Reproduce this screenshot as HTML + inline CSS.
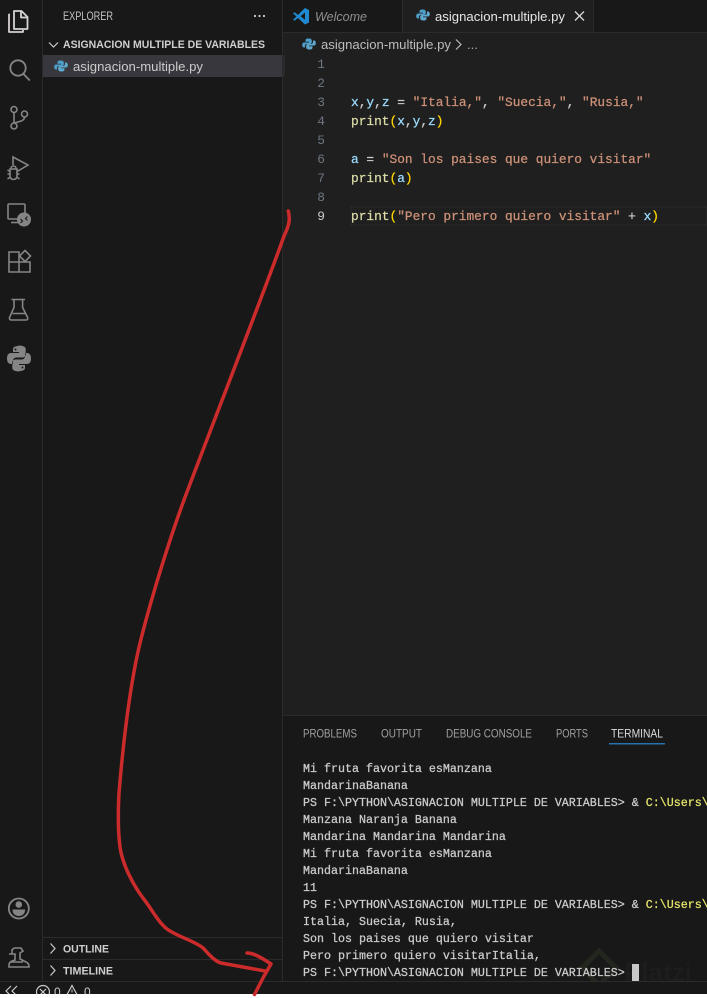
<!DOCTYPE html>
<html><head><meta charset="utf-8"><style>
html,body{margin:0;padding:0;background:#fff;width:707px;height:998px;overflow:hidden}
svg{display:block}
.s{font-family:"Liberation Sans",sans-serif}
.m{font-family:"Liberation Mono",monospace}
.c text{font-family:"Liberation Mono",monospace;font-size:12.83px;stroke:currentColor}
.c tspan{stroke-width:.25px}
.t text{font-family:"Liberation Mono",monospace;font-size:11.67px;fill:#cccccc;stroke-width:.25px}
.ln text{font-family:"Liberation Mono",monospace;font-size:12.83px;fill:#6e7681;text-anchor:end}
.i{fill:none;stroke:#858585;stroke-width:1.6}
</style></head><body>
<svg width="707" height="998" viewBox="0 0 707 998" xmlns="http://www.w3.org/2000/svg">
<defs>
<g id="py"><path d="M-.5-5.500c-2.500 0-3 1-3 2v1.300h3.500v.7h-5c-1.200 0-1.800 1-1.800 2.500s.6 2.500 1.800 2.500h1v-1.500c0-1.200.9-2 2-2h3c1 0 1.800-.8 1.800-1.800v-1.700c0-1-.9-2-3.300-2z" fill="#4d9fc9"/><path d="M.5 5.500c2.500 0 3-1 3-2v-1.300h-3.500v-.7h5c1.200 0 1.800-1 1.800-2.500s-.6-2.500-1.800-2.500h-1v1.500c0 1.200-.9 2-2 2h-3c-1 0-1.800.8-1.800 1.800v1.700c0 1 .9 2 3.300 2z" fill="#5fa9cf"/></g>
</defs>
<rect width="707" height="998" fill="#181818"/>
<!-- editor -->
<rect x="283" y="32" width="424" height="684" fill="#1f1f1f"/>
<rect x="282" y="0" width="1" height="981" fill="#2b2b2b"/>
<rect x="42" y="0" width="1" height="981" fill="#2b2b2b"/>
<rect x="283" y="32" width="424" height="1" fill="#2b2b2b"/>
<!-- sidebar -->
<text class="s" x="63" y="20" font-size="11.500" fill="#c4c4c4" textLength="50" lengthAdjust="spacingAndGlyphs">EXPLORER</text>
<circle cx="255" cy="16" r="1.100" fill="#ccc"/><circle cx="259.500" cy="16" r="1.100" fill="#ccc"/><circle cx="264" cy="16" r="1.100" fill="#ccc"/>
<path d="M49 42.500l4.500 4.500 4.500-4.500" fill="none" stroke="#ccc" stroke-width="1.200"/>
<text class="s" x="63" y="48" font-size="11" font-weight="700" fill="#cfcfcf" textLength="202" lengthAdjust="spacingAndGlyphs">ASIGNACION MULTIPLE DE VARIABLES</text>
<rect x="43" y="55" width="239" height="22" fill="#37373d"/>
<use href="#py" x="61" y="66"/>
<text class="s" x="73" y="71" font-size="13" fill="#cccccc" textLength="130" lengthAdjust="spacingAndGlyphs">asignacion-multiple.py</text>
<rect x="43" y="937" width="239" height="1" fill="#2b2b2b"/>
<rect x="43" y="959" width="239" height="1" fill="#2b2b2b"/>
<path d="M50.500 943.500l4.500 5-4.500 5" fill="none" stroke="#ccc" stroke-width="1.200"/>
<text class="s" x="63" y="952.500" font-size="11" font-weight="700" fill="#cfcfcf" textLength="46" lengthAdjust="spacingAndGlyphs">OUTLINE</text>
<path d="M50.500 965.500l4.500 5-4.500 5" fill="none" stroke="#ccc" stroke-width="1.200"/>
<text class="s" x="63" y="974.500" font-size="11" font-weight="700" fill="#cfcfcf" textLength="50" lengthAdjust="spacingAndGlyphs">TIMELINE</text>
<!-- activity icons -->
<g fill="none" stroke="#d4d4d4" stroke-width="1.800" stroke-linejoin="round">
<path d="M14 11h7.500l6 6v12h-13.500z"/><path d="M21 11v6.500h6.500"/><path d="M10 14.500h-1v17.500h14v-2" stroke="#d8d0d0"/>
</g>
<g class="i"><circle cx="18" cy="68" r="7.700" stroke-width="1.800"/><path d="M23.500 74l6.300 6.500" stroke-width="1.800"/></g>
<g class="i"><circle cx="14" cy="109.500" r="3"/><circle cx="14" cy="126" r="3"/><circle cx="24.500" cy="114" r="3"/><path d="M14 112.500v10.500M24.500 117c0 4-5 4.500-10.500 6"/></g>
<g class="i"><path d="M13 165v-8l15 8-10 6"/><path d="M10 169h7v7c0 2-1.500 3.500-3.500 3.500s-3.500-1.500-3.500-3.500zM11 168.500c0-1.500 1-2.500 2.500-2.500s2.500 1 2.500 2.500M7.500 170l2.500 1.500M19.500 170l-2.500 1.500M7.500 174h2.500M17 174h2.500M7.500 179l3-2M19.500 179l-3-2"/></g>
<g class="i"><rect x="8" y="204" width="17" height="15" rx="1"/><path d="M11 222.500h9"/></g>
<circle cx="24" cy="219.500" r="7" fill="#858585"/><path d="M20.500 219l2 2-2 2M27.500 216.500l-2 2 2 2" fill="none" stroke="#1f1f1f" stroke-width="1.200"/>
<g class="i"><path d="M9 252h10v20h-10zM9 262h21v10h-11"/><path d="M25 250.500l5.500 5.500-5.500 5.500-5.500-5.500z"/></g>
<g class="i"><path d="M11.500 299.500h13.500M14 299.500v8l-4.500 10c-.5 1.500.5 2.500 2 2.500h14.500c1.500 0 2.200-1 1.600-2.500l-5-10v-8M12.500 313.500h13"/></g>
<path d="M18.500 346c-5 0-5.500 2-5.500 3.500v2.500h6v1h-8c-2.500 0-4 2-4 5.500s1.500 5.500 4 5.500h2v-3c0-2 1.500-3.500 3.500-3.500h6c1.800 0 3.200-1.500 3.200-3.200v-5.300c0-1.800-1.700-3.500-7.700-3.500zM15.500 348.500a1 1 0 1 1 0 2 1 1 0 0 1 0-2zM19.500 371c5 0 5.500-2 5.500-3.500v-2.500h-6v-1h8c2.500 0 4-2 4-5.500s-1.500-5.500-4-5.500h-2v3c0 2-1.500 3.500-3.500 3.500h-6c-1.800 0-3.200 1.500-3.200 3.200v5.300c0 1.800 1.700 3.500 7.700 3.500zM22.500 368.500a1 1 0 1 1 0-2 1 1 0 0 1 0 2z" fill="#858585" fill-rule="evenodd"/>
<g class="i"><circle cx="18.800" cy="908.500" r="10" stroke-width="1.800"/></g>
<circle cx="18.800" cy="904.500" r="3.300" fill="#858585"/><path d="M12.500 909.500h12.600c0 4-2.500 6.500-6.300 6.500s-6.300-2.500-6.300-6.500z" fill="#858585"/>
<g class="i"><path d="M14 948h7l2 3-3 2v6l6 3c2 1 3 2 3 4v1h-20v-2c0-2 1-3 3-4l3-1v-6h-6M14 948l-2 2v4M11 962h12"/></g>
<!-- tabs -->
<rect x="283" y="0" width="424" height="32" fill="#181818"/>
<rect x="403" y="0" width="190" height="32" fill="#1f1f1f"/>
<rect x="402" y="0" width="1" height="32" fill="#2b2b2b"/><rect x="593" y="0" width="1" height="32" fill="#2b2b2b"/>
<path d="M305 8l4 2v12.500l-4 2-7-6.500-3.500 2.700-1.500-1 3.500-3.200-3.500-3.300 1.500-1 3.500 2.700zM305 12.500l-4.500 3.800 4.500 3.500z" fill="#1f8ad2" fill-rule="evenodd"/>
<text class="s" x="315" y="21" font-size="13" font-style="italic" fill="#8f8f8f" textLength="52" lengthAdjust="spacingAndGlyphs">Welcome</text>
<use href="#py" x="423" y="15"/>
<text class="s" x="435" y="21" font-size="13" fill="#e6e6e6" textLength="130" lengthAdjust="spacingAndGlyphs">asignacion-multiple.py</text>
<path d="M575 11.500l9 9M584 11.500l-9 9" stroke="#d8d8d8" stroke-width="1.300"/>
<use href="#py" x="309" y="44"/>
<text class="s" x="321" y="49" font-size="13" fill="#bdbdbd" textLength="130" lengthAdjust="spacingAndGlyphs">asignacion-multiple.py</text>
<path d="M456 39.500l5 5-5 5" fill="none" stroke="#bbb" stroke-width="1.200"/>
<text class="s" x="467" y="49" font-size="13" fill="#aaa">...</text>
<rect x="283" y="55" width="2" height="22" fill="#2a2a2a"/>
<!-- current line -->
<rect x="351" y="207" width="356" height="18" fill="#1f1f1f" stroke="#2a2a2a"/>
<!-- line numbers -->
<g class="ln"><text x="325" y="68">1</text><text x="325" y="87">2</text><text x="325" y="106">3</text><text x="325" y="125">4</text><text x="325" y="144">5</text><text x="325" y="163">6</text><text x="325" y="182">7</text><text x="325" y="201">8</text><text x="325" y="220" style="fill:#cccccc">9</text></g>
<!-- code -->
<g class="c">
<text x="351" y="106" xml:space="preserve"><tspan fill="#9cdcfe" color="#9cdcfe">x</tspan><tspan fill="#ccc" color="#ccc">,</tspan><tspan fill="#9cdcfe" color="#9cdcfe">y</tspan><tspan fill="#ccc" color="#ccc">,</tspan><tspan fill="#9cdcfe" color="#9cdcfe">z</tspan><tspan fill="#ccc" color="#ccc"> = </tspan><tspan fill="#ce9178" color="#ce9178">"Italia,"</tspan><tspan fill="#ccc" color="#ccc">, </tspan><tspan fill="#ce9178" color="#ce9178">"Suecia,"</tspan><tspan fill="#ccc" color="#ccc">, </tspan><tspan fill="#ce9178" color="#ce9178">"Rusia,"</tspan></text>
<text x="351" y="125" xml:space="preserve"><tspan fill="#dcdcaa" color="#dcdcaa">print</tspan><tspan fill="#ffd700" color="#ffd700">(</tspan><tspan fill="#9cdcfe" color="#9cdcfe">x</tspan><tspan fill="#ccc" color="#ccc">,</tspan><tspan fill="#9cdcfe" color="#9cdcfe">y</tspan><tspan fill="#ccc" color="#ccc">,</tspan><tspan fill="#9cdcfe" color="#9cdcfe">z</tspan><tspan fill="#ffd700" color="#ffd700">)</tspan></text>
<text x="351" y="163" xml:space="preserve"><tspan fill="#9cdcfe" color="#9cdcfe">a</tspan><tspan fill="#ccc" color="#ccc"> = </tspan><tspan fill="#ce9178" color="#ce9178">"Son los paises que quiero visitar"</tspan></text>
<text x="351" y="182" xml:space="preserve"><tspan fill="#dcdcaa" color="#dcdcaa">print</tspan><tspan fill="#ffd700" color="#ffd700">(</tspan><tspan fill="#9cdcfe" color="#9cdcfe">a</tspan><tspan fill="#ffd700" color="#ffd700">)</tspan></text>
<text x="351" y="220" xml:space="preserve"><tspan fill="#dcdcaa" color="#dcdcaa">print</tspan><tspan fill="#ffd700" color="#ffd700">(</tspan><tspan fill="#ce9178" color="#ce9178">"Pero primero quiero visitar"</tspan><tspan fill="#ccc" color="#ccc"> + </tspan><tspan fill="#9cdcfe" color="#9cdcfe">x</tspan><tspan fill="#ffd700" color="#ffd700">)</tspan></text>
</g>
<!-- panel -->
<rect x="283" y="716" width="424" height="265" fill="#181818"/>
<rect x="283" y="715" width="424" height="1" fill="#2b2b2b"/>
<g class="s" font-size="11.500" fill="#a0a0a0">
<text x="303" y="737.500" textLength="54" lengthAdjust="spacingAndGlyphs">PROBLEMS</text>
<text x="381" y="737.500" textLength="41" lengthAdjust="spacingAndGlyphs">OUTPUT</text>
<text x="446" y="737.500" textLength="86" lengthAdjust="spacingAndGlyphs">DEBUG CONSOLE</text>
<text x="556" y="737.500" textLength="32" lengthAdjust="spacingAndGlyphs">PORTS</text>
<text x="611" y="737.500" textLength="52" lengthAdjust="spacingAndGlyphs" fill="#dcdcdc">TERMINAL</text>
</g>
<rect x="609" y="743" width="56" height="1.500" fill="#2472b0"/>
<!-- watermark -->
<path d="M599 951l17 17-17 17-17-17z" fill="none" stroke="#22261f" stroke-width="5"/>
<text class="s" x="624" y="981" font-size="26" font-weight="700" fill="#1d1d1d">Platzi</text>
<!-- terminal -->
<g class="t">
<text x="303" y="772" stroke="#ccc">Mi fruta favorita esManzana</text>
<text x="303" y="789" stroke="#ccc">MandarinaBanana</text>
<text x="303" y="806" stroke="#ccc" xml:space="preserve">PS F:\PYTHON\ASIGNACION MULTIPLE DE VARIABLES&gt; &amp; <tspan style="fill:#e5e56a" stroke="#e5e56a">C:\Users\</tspan></text>
<text x="303" y="823" stroke="#ccc">Manzana Naranja Banana</text>
<text x="303" y="840" stroke="#ccc">Mandarina Mandarina Mandarina</text>
<text x="303" y="857" stroke="#ccc">Mi fruta favorita esManzana</text>
<text x="303" y="874" stroke="#ccc">MandarinaBanana</text>
<text x="303" y="891" stroke="#ccc">11</text>
<text x="303" y="908" stroke="#ccc" xml:space="preserve">PS F:\PYTHON\ASIGNACION MULTIPLE DE VARIABLES&gt; &amp; <tspan style="fill:#e5e56a" stroke="#e5e56a">C:\Users\</tspan></text>
<text x="303" y="925" stroke="#ccc">Italia, Suecia, Rusia,</text>
<text x="303" y="942" stroke="#ccc">Son los paises que quiero visitar</text>
<text x="303" y="959" stroke="#ccc">Pero primero quiero visitarItalia,</text>
<text x="303" y="976" stroke="#ccc">PS F:\PYTHON\ASIGNACION MULTIPLE DE VARIABLES&gt;</text>
</g>
<rect x="632" y="964" width="7" height="17" fill="#c8c8c8"/>
<!-- status bar -->
<rect x="0" y="981" width="707" height="17" fill="#181818"/>
<rect x="0" y="981" width="707" height="1" fill="#2b2b2b"/>
<path d="M11 986l-5 5 5 5M17 986l-5 5 5 5" fill="none" stroke="#ccc" stroke-width="1.200"/>
<circle cx="43" cy="992" r="6.500" fill="none" stroke="#ccc" stroke-width="1.200"/><path d="M40 989l6 6M46 989l-6 6" stroke="#ccc" stroke-width="1.200"/>
<text class="s" x="54" y="996" font-size="12" fill="#ccc">0</text>
<path d="M72 985.500l6 11h-12z" fill="none" stroke="#ccc" stroke-width="1.200"/><path d="M72 989.500v3" stroke="#ccc"/>
<text class="s" x="84" y="996" font-size="12" fill="#ccc">0</text>
<rect x="0" y="994" width="707" height="4" fill="#ffffff"/>
<!-- red annotation -->
<g fill="none" stroke="#cc2b2b" stroke-linecap="round" stroke-linejoin="round" stroke-width="3.500">
<path d="M288.300 211C290 218 290 224 284 236C265 290 208 436 184 500C170 538 152 595 140 643C130 685 123 745 119 793C118 812 118 832 120 847C122 862 131 882 143 898C151 908 158 922 167 929C178 937 195 941 203 948C209 954 214 961 221 963L265 971"/>
<path d="M247 953C254 953 262 958 271 964L263.500 977L254.500 994.500"/>
</g>
</svg>
</body></html>
